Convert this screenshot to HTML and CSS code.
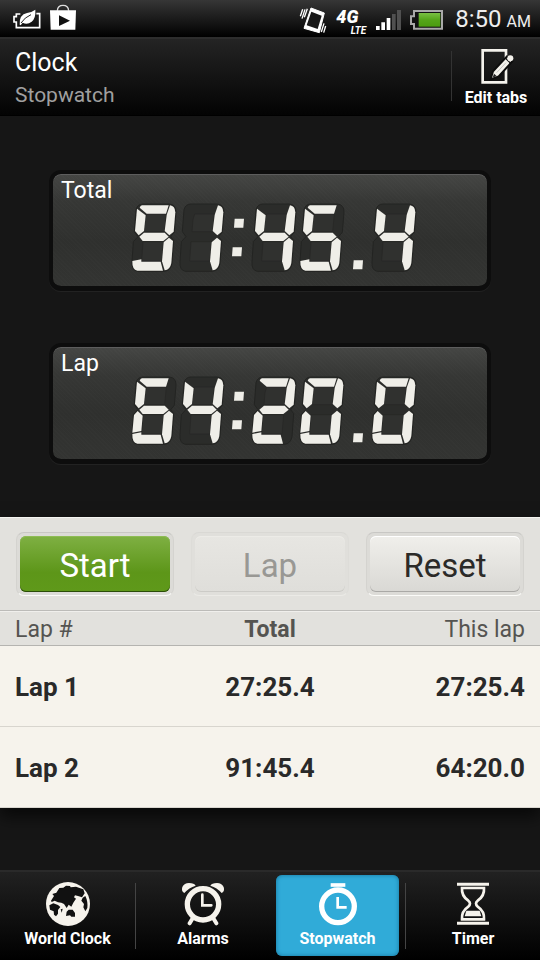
FILE: index.html
```html
<!DOCTYPE html>
<html lang="en">
<head>
<meta charset="utf-8">
<meta name="viewport" content="width=device-width, initial-scale=1">
<title>Clock</title>
<link rel="stylesheet" href="styles.css">
</head>
<body>
<!-- Shared segments of the seven-segment display -->
<svg class="defs" width="0" height="0">
  <defs>
    <path id="a" d="M30 7H110L102 32H44L23 14Q25 8 30 7Z"/>
    <path id="b" d="M114 7Q129 9 130 28L125 86L112 97L98 84L104 36Z"/>
    <path id="c" d="M111 104L123 114L118 180Q114 201 98 202L90 175L95 118Z"/>
    <path id="d" d="M1 174L28 169V176H86L93 203H16Q0 200 1 174Z"/>
    <path id="e" d="M17 105L32 119L28 165L1 170L6 117Z"/>
    <path id="f" d="M15 17L41 37L36 84L20 97L9 84Z"/>
    <path id="g" d="M22 101L36 89H98L110 101L94 114H32Z"/>
    <g id="off" class="off">
      <path class="rim" d="M32 3H112Q133 5 132 28L127 88L116 101L125 113L120 182Q116 203 98 205H16Q-2 202 0 176L4 116L18 101L7 86L12 20Q16 4 32 3Z"/>
      <path class="hole" d="M44 33H103L98 86H36L39 50ZM33 116H95L90 174H29Z"/>
    </g>
  </defs>
</svg>

<header>
  <div class="status">
    <svg width="28" height="22" viewBox="0 0 84 66">
      <path d="M22 18H10V26H3V42H10V59H80V17H70" fill="none" stroke="#fff" stroke-width="5"/>
      <path d="M20 50Q18 20 42 15Q58 12 67 5Q69 30 56 41Q43 51 29 44L23 52Z" fill="#fff"/>
      <path d="M24 45Q35 28 54 20" fill="none" stroke="#222" stroke-width="3"/>
    </svg>
    <svg class="store" width="26" height="26" viewBox="0 0 78 78">
      <path d="M22 20Q23 4 39 4T56 20" fill="none" stroke="#ddd" stroke-width="4"/>
      <path d="M0 19H78L76 77H2Z" fill="#fff"/>
      <path d="M27 34L60 50L27 66Z" fill="#111"/>
    </svg>
    <span class="spacer"></span>
    <svg class="vibrate" width="28" height="28" viewBox="0 0 84 84">
      <path d="M36 6L76 21L61 80L15 67Z" fill="#fff" stroke="#fff" stroke-width="3" stroke-linejoin="round"/>
      <path d="M37 17L68 29L56 69L23 58Z" fill="#181818"/>
      <path d="M18 10L9 38M11 10L4 31M25 8L16 34M67 78L75 52M74 80L80 60" fill="none" stroke="#fff" stroke-width="4"/>
    </svg>
    <span class="network"><b>4G</b><i>LTE</i></span>
    <svg class="signal" width="25" height="20" viewBox="0 0 75 60">
      <path fill="#fff" d="M0 48H11V60H0ZM16 37H27V60H16ZM32 24H43V60H32Z"/>
      <path fill="#505050" d="M48 12H59V60H48ZM63 0H75V60H63Z"/>
    </svg>
    <svg class="battery" width="33" height="20" viewBox="0 0 99 60">
      <defs>
        <linearGradient id="charge" x2="0" y2="1"><stop stop-color="#79c043"/><stop offset=".5" stop-color="#55a51a"/><stop offset="1" stop-color="#4b9c10"/></linearGradient>
      </defs>
      <path d="M12 3H96V56H12V42H3V19H12Z" fill="#111" stroke="#a9a9a9" stroke-width="6"/>
      <path d="M26 9H91V50H26Z" fill="url(#charge)"/>
    </svg>
    <time>8:50<small>AM</small></time>
  </div>
  <div class="titlebar">
    <div class="titles">
      <h1>Clock</h1>
      <p>Stopwatch</p>
    </div>
    <button class="edit" type="button">
      <svg width="36" height="36" viewBox="0 0 108 108">
        <path d="M14 4H84V100H14Z" fill="none" stroke="#f4f2ec" stroke-width="8"/>
        <path d="M38 91L45 67L87 22L103 37L62 82Z" fill="#f4f2ec" stroke="#0d0d0d" stroke-width="6"/>
        <path d="M83 28L98 43" stroke="#0d0d0d" stroke-width="4"/>
        <circle cx="97" cy="28" r="9" fill="#f4f2ec"/>
        <path d="M48 74L56 81L44 86Z" fill="#222"/>
        <path d="M56 71L84 41" stroke="#aaa" stroke-width="2"/>
      </svg>
      Edit tabs
    </button>
  </div>
</header>

<main>
  <div class="displays">
    <section class="panel">
      <h2>Total</h2>
      <div class="digits" role="img" aria-label="91:45.4">
        <svg class="digit" viewBox="0 0 144 207"><use href="#off"/><use href="#a"/><use href="#b"/><use href="#c"/><use href="#d"/><use href="#f"/><use href="#g"/></svg>
        <svg class="digit" viewBox="0 0 144 207"><use href="#off"/><use href="#b"/><use href="#c"/></svg>
        <svg class="mark" viewBox="0 0 72 207"><path d="M20 47H48L46 74H18ZM14 133H42L40 160H12Z"/></svg>
        <svg class="digit" viewBox="0 0 144 207"><use href="#off"/><use href="#b"/><use href="#c"/><use href="#f"/><use href="#g"/></svg>
        <svg class="digit" viewBox="0 0 144 207"><use href="#off"/><use href="#a"/><use href="#c"/><use href="#d"/><use href="#f"/><use href="#g"/></svg>
        <svg class="mark" viewBox="0 0 72 207"><path d="M17 172H45L43 199H15Z"/></svg>
        <svg class="digit" viewBox="0 0 144 207"><use href="#off"/><use href="#b"/><use href="#c"/><use href="#f"/><use href="#g"/></svg>
      </div>
    </section>
    <section class="panel">
      <h2>Lap</h2>
      <div class="digits" role="img" aria-label="64:20.0">
        <svg class="digit" viewBox="0 0 144 207"><use href="#off"/><use href="#a"/><use href="#c"/><use href="#d"/><use href="#e"/><use href="#f"/><use href="#g"/></svg>
        <svg class="digit" viewBox="0 0 144 207"><use href="#off"/><use href="#b"/><use href="#c"/><use href="#f"/><use href="#g"/></svg>
        <svg class="mark" viewBox="0 0 72 207"><path d="M20 47H48L46 74H18ZM14 133H42L40 160H12Z"/></svg>
        <svg class="digit" viewBox="0 0 144 207"><use href="#off"/><use href="#a"/><use href="#b"/><use href="#d"/><use href="#e"/><use href="#g"/></svg>
        <svg class="digit" viewBox="0 0 144 207"><use href="#off"/><use href="#a"/><use href="#b"/><use href="#c"/><use href="#d"/><use href="#e"/><use href="#f"/></svg>
        <svg class="mark" viewBox="0 0 72 207"><path d="M17 172H45L43 199H15Z"/></svg>
        <svg class="digit" viewBox="0 0 144 207"><use href="#off"/><use href="#a"/><use href="#b"/><use href="#c"/><use href="#d"/><use href="#e"/><use href="#f"/></svg>
      </div>
    </section>
  </div>

  <div class="sheet">
    <div class="actions">
      <div class="well"><button class="start" type="button">Start</button></div>
      <div class="well muted"><button type="button" disabled>Lap</button></div>
      <div class="well"><button type="button">Reset</button></div>
    </div>
    <table>
      <thead>
        <tr><th scope="col">Lap #</th><th scope="col" class="sum">Total</th><th scope="col">This lap</th></tr>
      </thead>
      <tbody>
        <tr><td>Lap 1</td><td>27:25.4</td><td>27:25.4</td></tr>
        <tr><td>Lap 2</td><td>91:45.4</td><td>64:20.0</td></tr>
      </tbody>
    </table>
  </div>
</main>

<nav>
  <a href="#world">
    <svg width="44" height="44" viewBox="0 0 132 132">
      <circle cx="66" cy="66" r="66" fill="#f6f3ec"/>
      <g fill="#111">
        <path d="M15 56L24 42L19 36L31 32L40 18L52 17L60 11L72 12L74 16L90 14L112 22L116 34L108 46L96 42L87 40L84 46L90 50L82 62L76 74L68 68L62 78L54 66L46 62L36 61L26 56L17 60Z"/>
        <path d="M10 70L22 64L36 69L43 75L36 84L36 95L30 103L24 98L23 88L12 83Z"/>
        <path d="M62 89L68 83L80 83L87 93L87 104L76 104L72 100L60 102Z"/>
        <path d="M110 47L118 42Q126 58 124 78L118 88L112 76L114 66L106 56Z"/>
        <path d="M44 82L50 80L47 92Z"/>
      </g>
    </svg>
    World Clock
  </a>
  <a href="#alarms">
    <svg width="44" height="44" viewBox="0 0 132 132">
      <g fill="none" stroke="#f6f3ec">
        <circle cx="66" cy="67" r="47" stroke-width="16"/>
        <path d="M64 38V70H91" stroke-width="8" stroke-linecap="round"/>
        <path d="M35 109L26 124M97 109L106 124" stroke-width="12" stroke-linecap="round"/>
      </g>
      <path d="M10 33Q0 28 4 15Q10 3 24 3Q40 3 44 11Q24 17 10 33ZM122 33Q132 28 128 15Q122 3 108 3Q92 3 88 11Q108 17 122 33Z" fill="#f6f3ec"/>
    </svg>
    Alarms
  </a>
  <a href="#stopwatch" class="active" aria-current="page">
    <svg width="44" height="44" viewBox="0 0 132 132">
      <g fill="none" stroke="#fff">
        <circle cx="66" cy="73" r="49" stroke-width="16"/>
        <path d="M44 9H88" stroke-width="11"/>
        <path d="M65 45V76H92" stroke-width="8"/>
      </g>
    </svg>
    Stopwatch
  </a>
  <a href="#timer">
    <svg width="44" height="44" viewBox="0 0 132 132">
      <g fill="none" stroke="#f6f3ec">
        <path d="M18 7H114M18 124H114" stroke-width="9"/>
        <path d="M33 18H99Q101 42 80 56Q70 64 80 74Q101 88 99 112H33Q31 88 52 74Q62 64 52 56Q31 42 33 18Z" stroke-width="8"/>
      </g>
      <path d="M46 86H86L91 103H41Z" fill="#f6f3ec"/>
    </svg>
    Timer
  </a>
</nav>
</body>
</html>
```
FILE: styles.css
```css
* {
  box-sizing: border-box;
}

body {
  margin: 0;
  min-height: 100vh;
  display: flex;
  flex-direction: column;
  background: #161616;
  color: #fff;
  font-family: Roboto, "Liberation Sans", sans-serif;
}

h1, h2, p {
  margin: 0;
  font-weight: 400;
}

svg {
  display: block;
  flex: none;
}

button {
  border: 0;
  padding: 0;
  background: none;
  color: inherit;
  font-family: inherit;
}

.defs {
  position: absolute;
}

/* Status bar */
.status {
  display: flex;
  align-items: center;
  height: 37px;
  padding: 0 9px 0 13px;
  background: linear-gradient(#363636, #000);
}

.store {
  margin: 0 0 4px 9px;
}

.spacer {
  flex: 1;
}

.vibrate {
  margin: 2px 9px 0 0;
}

.network {
  display: flex;
  flex-direction: column;
  gap: 3px;
  width: 30px;
  margin: 8px 10px 0 0;
  font-style: italic;
}

.network b {
  font-size: 18px;
  line-height: 14px;
  font-weight: 900;
}

.network i {
  align-self: flex-end;
  font-size: 10px;
  line-height: 8px;
  font-weight: 700;
}

.signal {
  margin: 2px 9px 0 0;
}

.battery {
  margin: 2px 12px 0 0;
}

time {
  display: flex;
  align-items: baseline;
  gap: 5px;
  padding-top: 4px;
  color: #eee;
  font-size: 24px;
  line-height: 33px;
}

time small {
  font-size: 16px;
}

/* Title bar */
.titlebar {
  display: flex;
  justify-content: space-between;
  height: 79px;
  border-top: 2px solid #2d2d2d;
  border-bottom: 1px solid #000;
  background: linear-gradient(#242424, #030303);
}

.titles {
  padding: 8px 15px;
}

.titles h1 {
  font-size: 25px;
  line-height: 32px;
}

.titles p {
  color: #a0a0a0;
  font-size: 21px;
  line-height: 32px;
}

.edit {
  display: flex;
  flex-direction: column;
  align-items: center;
  gap: 3px;
  margin: 12px 0 14px;
  width: 89px;
  border-left: 1px solid #333;
  font-size: 16px;
  line-height: 20px;
  font-weight: 700;
}

.edit svg {
  margin-top: -2px;
}

/* Displays */
.displays {
  display: flex;
  flex-direction: column;
  gap: 52px;
  padding: 54px 49px 53px;
}

.panel {
  height: 121px;
  padding: 0 8px;
  border: 4px solid #0d0d0d;
  border-bottom-width: 5px;
  border-radius: 12px;
  background: repeating-linear-gradient(45deg, #ffffff03 0 1px, #0000 1px 3px), linear-gradient(#454644, #363735 25%, #2f302e 60%, #333432);
  background-clip: padding-box;
  background-color: #0d0d0d;
  box-shadow: 0 1px 0 #222, inset 0 1px 0 #5d5d5d;
}

.panel h2 {
  padding-top: 5px;
  font-size: 23px;
  line-height: 24px;
}

.digits {
  display: flex;
  justify-content: center;
  padding-left: 12px;
  fill: #efeee8;
}

.digit {
  width: 48px;
  height: 69px;
  overflow: visible;
}

.mark {
  width: 24px;
  height: 69px;
}

.off .rim {
  fill: #2b2c2a;
  stroke: #232422;
  stroke-width: 3px;
}

.off .hole {
  fill: #30312f;
  stroke: #252624;
  stroke-width: 2px;
}

/* Controls and lap list */
.sheet {
  border-top: 1px solid #f4f4f0;
  background: #e2e1dd;
  box-shadow: 0 8px 16px #000a;
}

.actions {
  display: grid;
  grid-template-columns: repeat(3, 1fr);
  gap: 17px;
  padding: 14px 16px;
  border-bottom: 1px solid #bcbbb8;
}

.well {
  display: grid;
  height: 64px;
  padding: 3px;
  border: 1px solid;
  border-color: #c8c7c4 #d4d3cf #fbfbf8;
  border-radius: 8px;
  background: #dcdbd7;
}

.well button {
  padding-top: 3px;
  border-radius: 6px;
  background: linear-gradient(#f0efeb, #d9d8d4);
  box-shadow: inset 0 1px 0 #fff, inset 0 -1px 0 #aaa9a6;
  color: #2b2a28;
  font-size: 33px;
  line-height: 53px;
}

.well .start {
  background: linear-gradient(#7fb043, #5d9619 65%, #5f991a);
  box-shadow: inset 0 1px 0 #8ebc55, inset 0 -1px 0 #2a4c08;
  color: #fff;
}

.muted {
  border-color: #d9d8d4 #dddcd8 #ebeae6;
  background: #e0dfdb;
}

.muted button {
  background: linear-gradient(#e7e6e2, #dfdeda);
  box-shadow: inset 0 1px 0 #ecebe7, inset 0 -1px 0 #cccbc7;
  color: #999894;
}

table {
  width: 100%;
  table-layout: fixed;
  border-spacing: 0;
}

th, td {
  padding: 2px 15px 0;
  text-align: center;
}

th:first-child, td:first-child {
  text-align: left;
}

th:last-child, td:last-child {
  text-align: right;
}

th {
  height: 35px;
  border-top: 1px solid #f0efec;
  border-bottom: 1px solid #b5b4b0;
  color: #555451;
  font-size: 23px;
  font-weight: 400;
}

.sum {
  font-weight: 700;
}

td {
  height: 81px;
  border-bottom: 1px solid #d8d5ce;
  background: #f6f3ec;
  color: #292929;
  font-size: 26px;
  font-weight: 700;
}

/* Tabs */
nav {
  display: grid;
  grid-template-columns: repeat(4, 1fr);
  height: 90px;
  margin-top: auto;
  border-top: 2px solid #2a2a2a;
  background: linear-gradient(#212121, #000);
}

nav a {
  display: flex;
  flex-direction: column;
  align-items: center;
  gap: 3px;
  margin: 11px 0;
  border-left: 1px solid #444;
  color: #fff;
  font-size: 16px;
  line-height: 20px;
  font-weight: 700;
  text-decoration: none;
  white-space: nowrap;
}

nav a svg {
  margin-top: -1px;
}

nav a:first-child {
  border-left: 0;
}

nav .active {
  margin: 3px 6px 4px;
  padding-top: 8px;
  border: 0;
  border-radius: 6px;
  background: #30abd8;
  box-shadow: inset 0 0 4px #16749b;
}
```
